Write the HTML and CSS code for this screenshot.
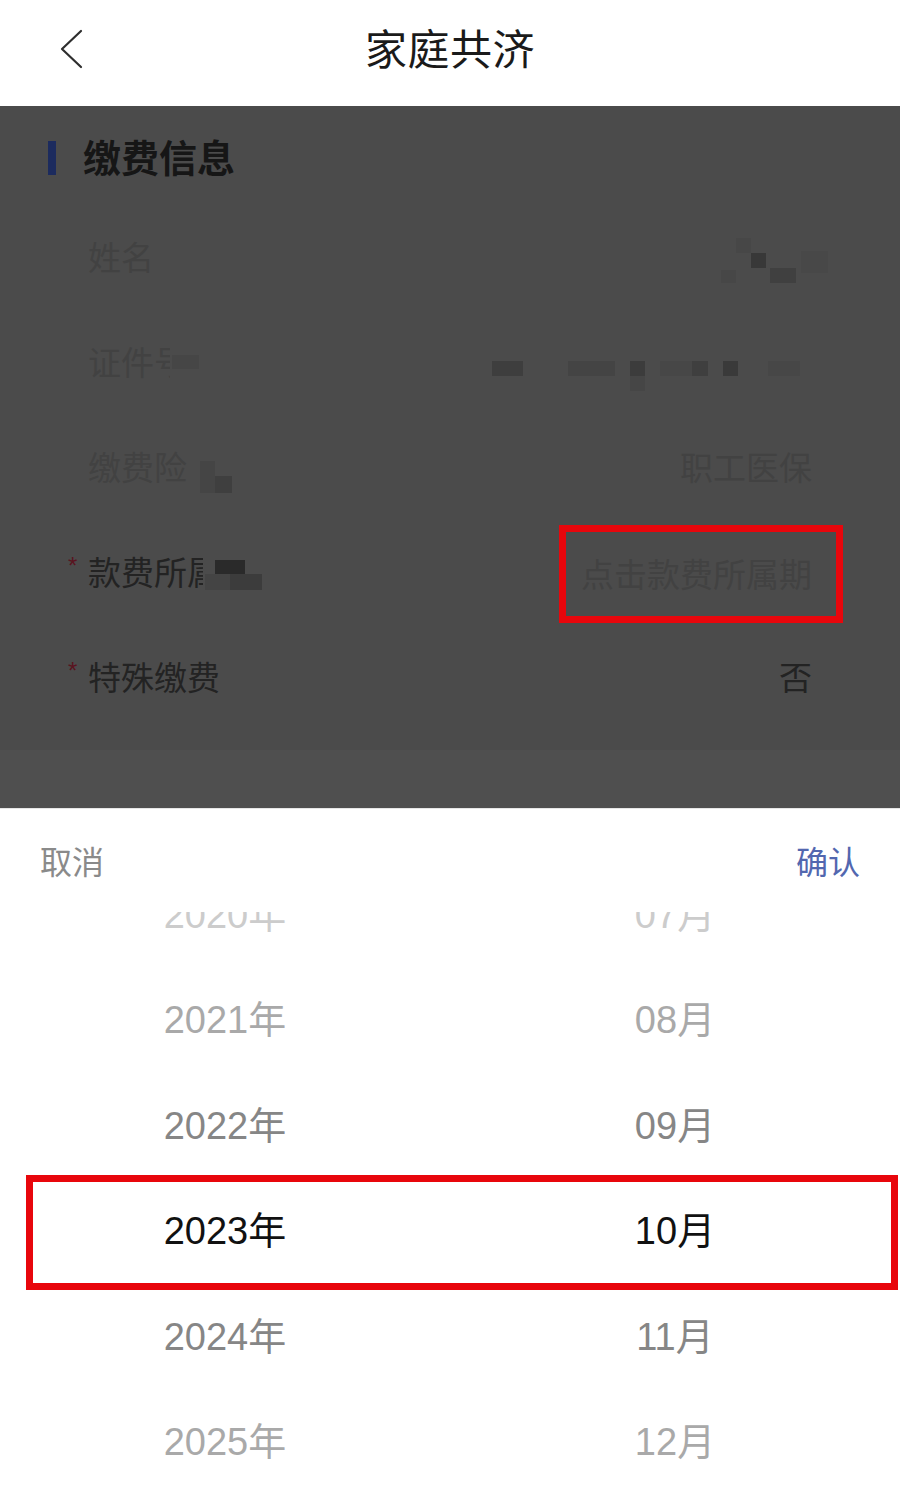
FILE: index.html
```html
<!DOCTYPE html>
<html lang="zh-CN">
<head>
<meta charset="utf-8">
<title>家庭共济</title>
<link rel="stylesheet" href="styles.css">
</head>
<body>
<div class="screen">
  <header class="nav">
    <svg class="back" viewBox="0 0 24 40" aria-hidden="true"><polyline points="21,2 2,20 21,38"/></svg>
    <h1 class="nav-title">家庭共济</h1>
    <span></span>
  </header>

  <main class="page">
    <section class="card">
      <div class="section-head"><span class="bar"></span><h2>缴费信息</h2></div>

      <div class="row faded">
        <span class="label">姓名</span>
        <svg class="mosaic m-name" viewBox="0 0 112 63" width="112" height="63" aria-hidden="true">
          <rect x="18" y="13" width="15" height="15" fill="#474747"/>
          <rect x="33" y="28" width="15" height="15" fill="#383838"/>
          <rect x="52" y="43" width="26" height="15" fill="#404040"/>
          <rect x="3" y="45" width="15" height="13" fill="#474747"/>
          <rect x="83" y="26" width="27" height="22" fill="#484848"/>
        </svg>
      </div>

      <div class="row faded">
        <span class="label">证件<span class="cut">号</span>
          <svg class="mosaic" viewBox="0 0 30 30" width="30" height="30" aria-hidden="true">
            <rect x="2" y="8" width="27" height="14" fill="#464646"/>
          </svg>
        </span>
        <svg class="mosaic m-id" viewBox="0 0 325 65" width="325" height="65" aria-hidden="true">
          <rect x="2" y="32" width="31" height="15" fill="#3e3e3e"/>
          <rect x="78" y="32" width="47" height="15" fill="#444444"/>
          <rect x="140" y="32" width="15" height="15" fill="#3c3c3c"/>
          <rect x="140" y="47" width="15" height="15" fill="#464646"/>
          <rect x="170" y="32" width="32" height="15" fill="#474747"/>
          <rect x="202" y="32" width="16" height="15" fill="#3f3f3f"/>
          <rect x="233" y="32" width="15" height="15" fill="#3a3a3a"/>
          <rect x="278" y="32" width="32" height="15" fill="#474747"/>
        </svg>
      </div>

      <div class="row faded">
        <span class="label">缴费险
          <svg class="mosaic m-ins" viewBox="0 0 36 34" width="36" height="34" aria-hidden="true">
            <rect x="4" y="1" width="15" height="32" fill="#454545"/>
            <rect x="19" y="16" width="17" height="17" fill="#3f3f3f"/>
          </svg>
        </span>
        <span class="value">职工医保</span>
      </div>

      <div class="row required dark">
        <span class="star">*</span>
        <span class="label">款费所<span class="cut">属</span>
          <svg class="mosaic m-per" viewBox="0 0 60 32" width="60" height="32" aria-hidden="true">
            <rect x="0" y="16" width="25" height="16" fill="#444444"/>
            <rect x="10" y="2" width="30" height="14" fill="#2a2a2a"/>
            <rect x="25" y="16" width="32" height="16" fill="#3c3c3c"/>
          </svg>
        </span>
        <span class="value annotated faded-text">点击款费所属期</span>
      </div>

      <div class="row required dark">
        <span class="star">*</span>
        <span class="label">特殊缴费</span>
        <span class="value">否</span>
      </div>
    </section>
    <div class="band"></div>
  </main>

  <section class="picker">
    <div class="toolbar">
      <button class="btn cancel" type="button">取消</button>
      <button class="btn confirm" type="button">确认</button>
    </div>
    <div class="wheel">
      <div class="cols">
        <ul class="col">
          <li class="c5">2020年</li>
          <li class="c4">2021年</li>
          <li class="c3">2022年</li>
          <li class="c1">2023年</li>
          <li class="c3">2024年</li>
          <li class="c4">2025年</li>
        </ul>
        <ul class="col">
          <li class="c5">07月</li>
          <li class="c4">08月</li>
          <li class="c3">09月</li>
          <li class="c1">10月</li>
          <li class="c3">11月</li>
          <li class="c4">12月</li>
        </ul>
      </div>
      <div class="highlight"></div>
    </div>
  </section>
</div>
</body>
</html>
```

FILE: styles.css
```css
html, body {
  margin: 0;
  padding: 0;
  background: #ffffff;
}

body {
  font-family: "Noto Sans CJK SC", "Noto Sans", sans-serif;
}

.screen {
  width: 900px;
  height: 1487px;
  overflow: hidden;
  display: flex;
  flex-direction: column;
  background: #ffffff;
}

/* ---------- navigation bar ---------- */
.nav {
  height: 106px;
  flex: none;
  display: grid;
  grid-template-columns: 1fr auto 1fr;
  align-items: center;
  background: #ffffff;
}

.back {
  width: 24px;
  height: 40px;
  margin-left: 60px;
  margin-bottom: 8px;
  fill: none;
  stroke: #2e2e2e;
  stroke-width: 2.2;
  stroke-linecap: round;
  stroke-linejoin: round;
}

.nav-title {
  margin: 0 0 12px;
  font-size: 42px;
  font-weight: 400;
  line-height: 1;
  color: #1a1a1a;
  letter-spacing: 0.5px;
}

/* ---------- dimmed page ---------- */
.page {
  height: 702px;
  flex: none;
  display: flex;
  flex-direction: column;
  background: #4b4b4b;
}

.card {
  height: 644px;
  flex: none;
}

.band {
  flex: 1;
  background: #4f4f4f;
}

.section-head {
  height: 100px;
  box-sizing: border-box;
  padding: 0 0 0 48px;
  display: flex;
  align-items: center;
}

.bar {
  width: 8px;
  height: 34px;
  background: #1c2b5e;
  margin-right: 27px;
  margin-top: 4px;
}

.section-head h2 {
  margin: 0;
  font-size: 38px;
  font-weight: 700;
  line-height: 1;
  color: #161616;
}

.row {
  height: 105px;
  box-sizing: border-box;
  padding: 0 88px 4px;
  display: flex;
  align-items: center;
  font-size: 33px;
  line-height: 1;
}

.row.required {
  padding-left: 68px;
}

.faded {
  color: #424242;
}

.dark {
  color: #232323;
}

.faded-text {
  color: #424242;
}

.star {
  width: 20px;
  font-family: "Liberation Sans", sans-serif;
  font-size: 24px;
  color: #5a1420;
  margin-top: -12px;
}

.label {
  flex: 1;
  display: flex;
  align-items: center;
  white-space: nowrap;
}

.value {
  text-align: right;
  white-space: nowrap;
}

.cut {
  display: inline-block;
  width: 16px;
  overflow: hidden;
  white-space: nowrap;
}

.mosaic {
  display: block;
  flex: none;
}

.m-name {
  margin-right: -18px;
}

.m-id {
  margin-right: -3px;
}

.m-ins {
  margin-left: 9px;
  margin-top: 20px;
}

.m-per {
  margin-left: 2px;
  margin-top: 4px;
}

.value.annotated {
  height: 84px;
  display: flex;
  align-items: center;
  border: 7px solid #e8060c;
  padding: 0 24px 0 15px;
  margin-right: -31px;
  margin-top: 4px;
}

/* ---------- picker sheet ---------- */
.picker {
  flex: 1;
  display: flex;
  flex-direction: column;
  background: #ffffff;
  border-top: 1px solid #e6e6e6;
}

.toolbar {
  height: 103px;
  flex: none;
  box-sizing: border-box;
  padding: 0 40px;
  display: flex;
  justify-content: space-between;
  align-items: center;
}

.btn {
  background: none;
  border: 0;
  padding: 0;
  margin: 0 0 2px;
  font-family: "Noto Sans CJK SC", sans-serif;
  font-size: 32px;
  line-height: 1;
  cursor: pointer;
}

.cancel {
  color: #8a8a8a;
}

.confirm {
  color: #5267af;
}

.wheel {
  flex: 1;
  position: relative;
  overflow: hidden;
}

.cols {
  display: grid;
  grid-template-columns: 1fr 1fr;
  margin-top: -50px;
}

.col {
  list-style: none;
  margin: 0;
  padding: 0;
}

.col li {
  height: 105.5px;
  display: flex;
  align-items: center;
  justify-content: center;
  font-family: "Liberation Sans", "Noto Sans CJK SC", sans-serif;
  font-size: 38px;
  line-height: 1;
}

.c1 { color: #111111; }
.c3 { color: #868686; }
.c4 { color: #a9a9a9; }
.c5 { color: #cccccc; }

.highlight {
  position: absolute;
  left: 26px;
  top: 263px;
  width: 872px;
  height: 115px;
  box-sizing: border-box;
  border: 7px solid #e8060c;
  pointer-events: none;
}
```
